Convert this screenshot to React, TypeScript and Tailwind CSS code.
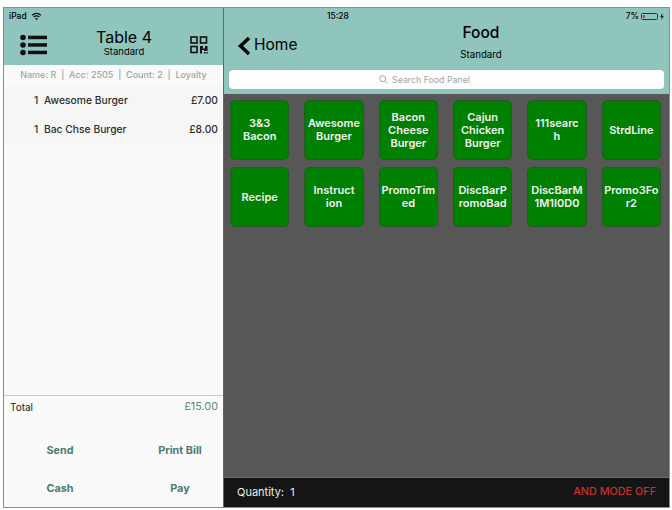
import React from "react";

const items: [string, string, string][] = [
  ["1", "Awesome Burger", "£7.00"],
  ["1", "Bac Chse Burger", "£8.00"],
];

const tiles = [
  "3&3 Bacon",
  "Awesome Burger",
  "Bacon Cheese Burger",
  "Cajun Chicken Burger",
  "111searc h",
  "StrdLine",
  "Recipe",
  "Instruct ion",
  "PromoTim ed",
  "DiscBarP romoBad",
  "DiscBarM 1M1I0D0",
  "Promo3Fo r2",
];

function Wifi() {
  return (
    <svg width="11" height="9" viewBox="0 0 11 9" fill="none" stroke="#111" strokeWidth="1.2">
      <path d="M1 3.2C3.7 .9 7.3 .9 10 3.2" />
      <path d="M2.6 5C4.3 3.6 6.7 3.6 8.4 5" />
      <path d="M5.5 8.2L4 6.6C4.9 5.9 6.1 5.9 7 6.6Z" fill="#111" stroke="none" />
    </svg>
  );
}

function Qr() {
  return (
    <svg width="18" height="18" viewBox="0 0 18 18" fill="none">
      <g stroke="#111" strokeWidth="1.6">
        <rect x="1" y="1" width="6" height="6" />
        <rect x="10.5" y="1" width="6" height="6" />
        <rect x="1" y="10.5" width="6" height="6" />
      </g>
      <path d="M10 10h3v2.5h2V10h2.5v5H14v-1h-2v3.500h-2z" fill="#111" />
      <path d="M14 16h1.500v1.500H14zM16.300 16h1.500v1.500h-1.500z" fill="#111" />
    </svg>
  );
}

export default function App() {
  return (
    <div className="h-[510px] w-[672px] bg-white pt-[7px] pb-[2px] pl-[3px] pr-[2px] font-['Inter','Liberation_Sans',sans-serif]">
      <div className="flex h-full border border-[#6b93c4] text-black">
        <aside className="flex h-full w-[219px] shrink-0 flex-col bg-[#fafafa]">
          <header className="h-[57px] bg-[#8fc5bd] pl-[5px] pr-[15px] pt-[3px]">
            <div className="flex h-[11px] items-center gap-[4px] text-[8.5px] font-medium leading-none">
              iPad <Wifi />
            </div>
            <div className="mt-[6px] flex items-center justify-between pl-[11px]">
              <svg width="28" height="22" viewBox="0 0 28 22" fill="#111">
                <circle cx="3" cy="3.500" r="2.800" />
                <circle cx="3" cy="11" r="2.800" />
                <circle cx="3" cy="18.500" r="2.800" />
                <rect x="8" y="1.700" width="19" height="3.500" />
                <rect x="8" y="9.200" width="19" height="3.500" />
                <rect x="8" y="16.700" width="19" height="3.500" />
              </svg>
              <div className="mb-[4px] ml-[10px] flex flex-col items-center text-center">
                <span className="text-[16px] leading-[19px]">Table 4</span>
                <span className="text-[9.500px] leading-[10px]">Standard</span>
              </div>
              <Qr />
            </div>
          </header>
          <div className="h-[21px] text-center text-[9px] font-medium leading-[19px] text-[#a3a3a3]">
            Name: R&nbsp; |&nbsp; Acc: 2505&nbsp; |&nbsp; Count: 2&nbsp; |&nbsp; Loyalty
          </div>
          <div className="bg-[#f6f6f6]">
            {items.map(([qty, name, price]) => (
              <div key={name} className="flex h-[29px] items-center pl-[30px] pr-[5px] text-[10.300px] font-medium text-[#2e2e2e]">
                <span className="w-[10px]">{qty}</span>
                <span className="flex-1">{name}</span>
                <span>{price}</span>
              </div>
            ))}
          </div>
          <div className="flex-1" />
          <div className="h-[112px] border-t border-[#c9c9c9]">
            <div className="flex h-[23px] items-center justify-between pl-[6px] pr-[5px] text-[10px]">
              <span className="text-[#222]">Total</span>
              <span className="text-[10.800px] text-[#5d8a82]">£15.00</span>
            </div>
            <div className="mt-[13px] grid grid-cols-[80px_80px] grid-rows-2 gap-x-[40px] pl-[16px] text-center text-[10.800px] font-bold text-[#4a7a70]">
              <div className="h-[38px] leading-[38px]">Send</div>
              <div className="h-[38px] whitespace-nowrap leading-[38px]">Print Bill</div>
              <div className="h-[38px] leading-[38px]">Cash</div>
              <div className="h-[38px] leading-[38px]">Pay</div>
            </div>
          </div>
        </aside>
        <main className="flex h-full flex-1 flex-col border-l border-[#4f6f78]">
          <header className="h-[86px] bg-[#8fc5bd] pl-[5px] pr-[5px] pt-[3px]">
            <div className="flex h-[11px] items-center justify-between">
              <span className="ml-[98px] text-[8.500px] font-medium leading-none">15:28</span>
              <span className="flex items-center gap-[2px] text-[8.500px] font-medium leading-none">
                7%
                <span className="flex h-[7px] w-[17px] items-center rounded-[1.500px] border border-[#333] pl-[1px]">
                  <span className="h-[3px] w-[1.500px] bg-[#d33]" />
                </span>
                <svg width="4" height="7" viewBox="0 0 4 7" fill="#111"><path d="M2.400 0L.3 3.900h1.400L1.400 7 3.700 3H2.200z" /></svg>
              </span>
            </div>
            <div className="relative flex h-[48px] items-center pl-[8px]">
              <svg width="15" height="20" viewBox="0 0 15 20" fill="none" stroke="#000" strokeWidth="3.500">
                <path d="M12 2L3.500 10l8.500 8" />
              </svg>
              <span className="mb-[2px] ml-[2px] text-[15.500px] leading-none">Home</span>
              <div className="absolute left-[232px] top-[-1px] flex w-[40px] flex-col items-center whitespace-nowrap">
                <span className="text-[15.500px] font-medium leading-[24px]">Food</span>
                <span className="mt-[4px] text-[9.700px] leading-[12px]">Standard</span>
              </div>
            </div>
            <div className="flex h-[19px] items-center justify-center rounded-[4px] bg-white pr-[44px] text-[8.800px] text-[#a3a3a3]">
              <svg className="mr-[4px]" width="9" height="9" viewBox="0 0 9 9" fill="none" stroke="#999" strokeWidth=".9">
                <circle cx="3.700" cy="3.700" r="3" />
                <path d="M6 6l2.700 2.700" />
              </svg>
              Search Food Panel
            </div>
          </header>
          <section className="flex-1 bg-[#575757] pl-[6px] pr-[8px] pt-[6px]">
            <div className="grid grid-cols-6 gap-x-[15px] gap-y-[7px]">
              {tiles.map((t) => (
                <div key={t} className="flex h-[60px] items-center justify-center break-all rounded-[5px] border border-[#215c21] bg-[#008000] px-[1px] text-center text-[11px] font-semibold leading-[13px] text-[#f2f2f2]">
                  <span>
                    {t.split(" ").map((line, i) => (
                      <React.Fragment key={i}>{i > 0 && <br />}{line}</React.Fragment>
                    ))}
                  </span>
                </div>
              ))}
            </div>
          </section>
          <footer className="flex h-[30px] items-center justify-between border-t border-[#6a6a6a] bg-[#151515] pl-[13px] pr-[13px] text-[10.800px]">
            <span className="text-[11px] text-[#ececec]">Quantity:&nbsp; 1</span>
            <span className="font-medium text-[#c9302f]">AND MODE OFF</span>
          </footer>
        </main>
      </div>
    </div>
  );
}
